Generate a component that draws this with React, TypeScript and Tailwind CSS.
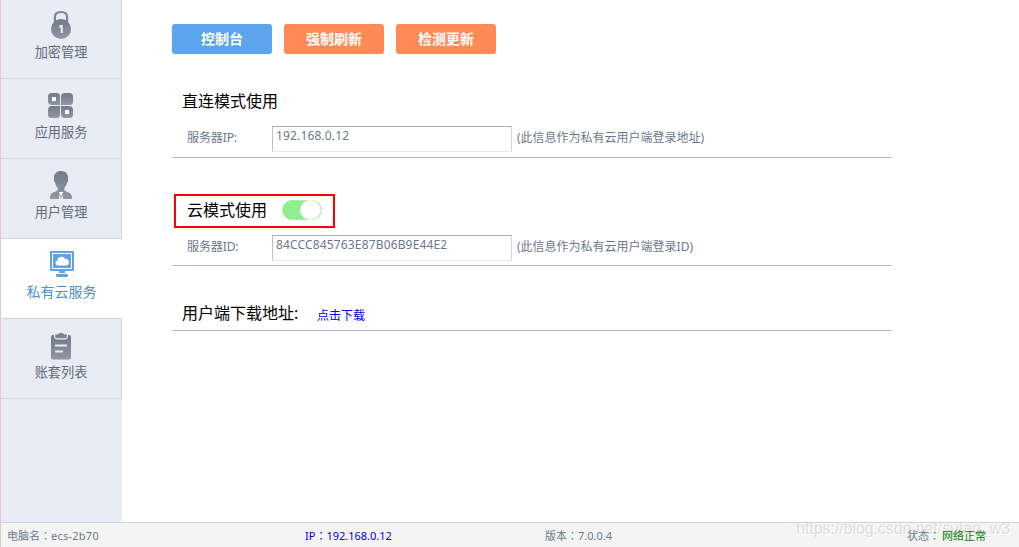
import React from 'react';
import clsx from 'clsx';

function LockIcon() {
  return (
    <svg width="22" height="30" viewBox="0 0 22 30" fill="none">
      <path d="M4.900 12V7.200C4.900 3.500 7.500 2 11 2s6.100 1.500 6.100 5.200V12" stroke="#7d8696" strokeWidth="2.200" />
      <circle cx="11" cy="19" r="10" fill="url(#iconGray)" />
      <path d="M9.500 15h3.300v8h-2v-5H9.500z" fill="#e8ecf4" />
    </svg>
  );
}

function AppsIcon() {
  return (
    <svg width="26" height="26" viewBox="0 0 26 26" fill="url(#iconGray)">
      <path d="M4 0h4.500a3.500 3.500 0 0 1 3.500 3.500V12H4a4 4 0 0 1-4-4V4a4 4 0 0 1 4-4z" />
      <path d="M17 0h4.500a3.500 3.500 0 0 1 3.500 3.500V9a3 3 0 0 1-3 3h-9V4a4 4 0 0 1 4-4z" />
      <path d="M4 13h8v8.500a3.500 3.500 0 0 1-3.500 3.500H3.500A3.500 3.500 0 0 1 0 21.500V17a4 4 0 0 1 4-4z" />
      <path d="M13 13h8a4 4 0 0 1 4 4v4.500a3.500 3.500 0 0 1-3.500 3.500H17a4 4 0 0 1-4-4z" />
      <rect x="4" y="4" width="4" height="4" fill="#fff" />
      <rect x="17" y="17" width="4" height="4" fill="#fff" />
    </svg>
  );
}

function UserIcon() {
  return (
    <svg width="22" height="28" viewBox="0 0 22 28" fill="url(#iconGray)">
      <path d="M11 0c4.300 0 7 2.500 7 6.300 0 1.200-.1 2 .1 2.900.2 1-.3 1.800-1.100 2.300-.6 2.500-1.500 4.200-2.700 5.500v2c0 1.600 7.700 2.200 7.700 7V28H0v-2c0-4.800 7.700-5.400 7.700-7v-2C6.500 15.700 5.600 14 5 11.500c-.8-.5-1.300-1.300-1.100-2.300.2-.9.100-1.700.1-2.900C4 2.500 6.700 0 11 0z" />
      <path d="M8.800 21h4.400l-1 2 .8 5H9l.8-5z" fill="#fff" />
      <path d="M10.500 23.500h1V28h-1z" />
    </svg>
  );
}

function CloudScreenIcon() {
  return (
    <svg width="24" height="27" viewBox="0 0 24 27" fill="#5fa3e4">
      <rect width="24" height="20" rx="1" />
      <rect x="2.500" y="2.500" width="19" height="15" fill="none" stroke="#fff" />
      <path d="M8 14.500a2.600 2.600 0 0 1-.6-5.100 4.100 4.100 0 0 1 7.800-1.300 3.200 3.200 0 1 1 .8 6.400z" fill="#fff" />
      <path d="M9 20h6v2H9z" />
      <rect x="6" y="23" width="12" height="3" rx="1" />
    </svg>
  );
}

function ListIcon() {
  return (
    <svg width="20" height="27" viewBox="0 0 20 27" fill="url(#iconGray)">
      <rect y="2" width="20" height="24.500" rx="2" />
      <path
        d="M4.200 1.500h2.600C7.500.4 8.500 0 10 0s2.500.4 3.200 1.500h2.600V3c0 1.500-.8 2.200-2.300 2.200h-7C5 5.200 4.200 4.500 4.200 3z"
        fill="#7a8393"
        stroke="#e8ecf4"
        strokeWidth="2.400"
        paintOrder="stroke"
      />
      <path d="M4 11.500h12v2H4zM4 17.500h8v2H4z" fill="#e8ecf4" />
    </svg>
  );
}

const menus = [
  { name: '加密管理', icon: <LockIcon />, box: 'h-[79px]', iconStyle: 'pt-[10px] h-[41px]' },
  { name: '应用服务', icon: <AppsIcon />, box: 'h-20', iconStyle: 'pt-[14px] h-[42px]' },
  { name: '用户管理', icon: <UserIcon />, box: 'h-20', iconStyle: 'pt-[12px] h-[42px]' },
  { name: '私有云服务', icon: <CloudScreenIcon />, box: 'h-20', iconStyle: 'pt-[12px] h-[42px]', active: true },
  { name: '账套列表', icon: <ListIcon />, box: 'h-20', iconStyle: 'pt-[14px] h-[42px]' },
];

function Sidebar() {
  return (
    <nav className="w-[121px] shrink-0 bg-[#e8ecf4]">
      <svg className="absolute" width="0" height="0">
        <defs>
          <linearGradient id="iconGray" x1="0" y1="0" x2="0" y2="1">
            <stop offset="0" stopColor="#717a8b" />
            <stop offset="1" stopColor="#9197a2" />
          </linearGradient>
        </defs>
      </svg>
      {menus.map(menu => (
        <button
          key={menu.name}
          className={clsx(
            'flex w-full flex-col items-center border-b border-[#cdd3e0]',
            menu.box,
            menu.active ? 'bg-white text-[14px] text-[#4a90cf]' : 'border-r text-[13.2px] text-[#5f6b7c]',
          )}
        >
          <span className={clsx('flex shrink-0 justify-center', menu.iconStyle)}>{menu.icon}</span>
          <span className="leading-[22px] whitespace-nowrap">{menu.name}</span>
        </button>
      ))}
    </nav>
  );
}

interface ServerRowProps {
  label: string;
  value: string;
  tip: string;
}

function ServerRow({ label, value, tip }: ServerRowProps) {
  return (
    <div className="flex h-[26px] text-xs leading-[23px] whitespace-nowrap text-[#6b788b]">
      <span className="w-[100px] pl-[15px] tracking-[-0.1px]">{label}</span>
      <input
        readOnly
        value={value}
        className="h-[26px] w-[240px] border border-t-[#abadb3] border-r-[#cfd3da] border-b-[#e3e9ef] border-l-[#bcbfc6] pb-[8px] pl-[3px] leading-[16px] tracking-[0.15px] outline-none"
      />
      <span className="pl-[5px]">{tip}</span>
    </div>
  );
}

// The TC face centres the full-width colon
function Colon() {
  return <span className="font-['Noto_Sans_CJK_TC',sans-serif] leading-none">：</span>;
}

function Footer() {
  return (
    <footer className="flex h-[25px] border-t border-[#cdd3e6] bg-[#f4f4f4] text-[11px] leading-[25px] whitespace-nowrap text-[#6b788b]">
      <span className="w-[298px] pl-[6px]">
        电脑名
        <Colon />
        <span className="tracking-[0.25px]">ecs-2b70</span>
      </span>
      <span className="w-[241px] pl-[6px] text-[#0000e6]">
        IP
        <Colon />
        192.168.0.12
      </span>
      <span className="w-[361px] pl-[5px]">
        版本
        <Colon />
        7.0.0.4
      </span>
      <span className="relative z-10 pl-[6px]">
        状态
        <Colon />
        <span className="ml-[2px] text-[#008000]">网络正常</span>
      </span>
    </footer>
  );
}

function App() {
  return (
    <div className="relative flex h-[547px] w-[1019px] flex-col overflow-hidden border-l border-[#e0c8cc] bg-white font-['Noto_Sans','Noto_Sans_CJK_SC',sans-serif]">
      <div className="flex flex-1">
        <Sidebar />
        <main className="w-[770px] pt-6 pl-[50px]">
          <div className="flex gap-3 text-sm font-bold text-white">
            <button className="h-[30px] w-[100px] rounded-[3px] bg-[#5ba5ec]">控制台</button>
            <button className="h-[30px] w-[100px] rounded-[3px] bg-[#ff8a55]">强制刷新</button>
            <button className="h-[30px] w-[100px] rounded-[3px] bg-[#ff8a55]">检测更新</button>
          </div>

          <section className="mt-[35px] border-b border-[#b4b9c6] pb-[5px]">
            <h2 className="mb-[13px] h-6 pl-[10px] text-base leading-6 text-black">直连模式使用</h2>
            <ServerRow label="服务器IP:" value="192.168.0.12" tip="(此信息作为私有云用户端登录地址)" />
          </section>

          <section className="mt-9 border-b border-[#b4b9c6] pb-1">
            <div className="mb-[7px] ml-[2px] flex h-[34px] w-[161px] items-center border-2 border-[#ff0000] pb-[2px] pl-[11px]">
              <h2 className="text-base leading-6 text-black">云模式使用</h2>
              <button className="ml-[15px] flex h-5 w-10 justify-end rounded-full border border-[#a5f0a5] bg-[#90ee90]">
                <span className="-my-px h-5 w-[21px] rounded-full border border-[#e2fae2] bg-white" />
              </button>
            </div>
            <ServerRow label="服务器ID:" value="84CCC845763E87B06B9E44E2" tip="(此信息作为私有云用户端登录ID)" />
          </section>

          <section className="mt-9 flex h-[29px] border-b border-[#b4b9c6] pl-[10px]">
            <h2 className="w-[135px] text-base leading-[23px] text-black">用户端下载地址:</h2>
            <a className="text-xs leading-[27px] text-[#0000ee]">点击下载</a>
          </section>
        </main>
      </div>
      <Footer />
      <span className="absolute right-[9px] bottom-[6px] font-['Liberation_Sans',sans-serif] text-base leading-6 tracking-[-0.08px] text-[#dcdcdc] [text-shadow:1px_1px_0_#ffffff]">
        https://blog.csdn.net/sutao_w3
      </span>
    </div>
  );
}

export default App;
